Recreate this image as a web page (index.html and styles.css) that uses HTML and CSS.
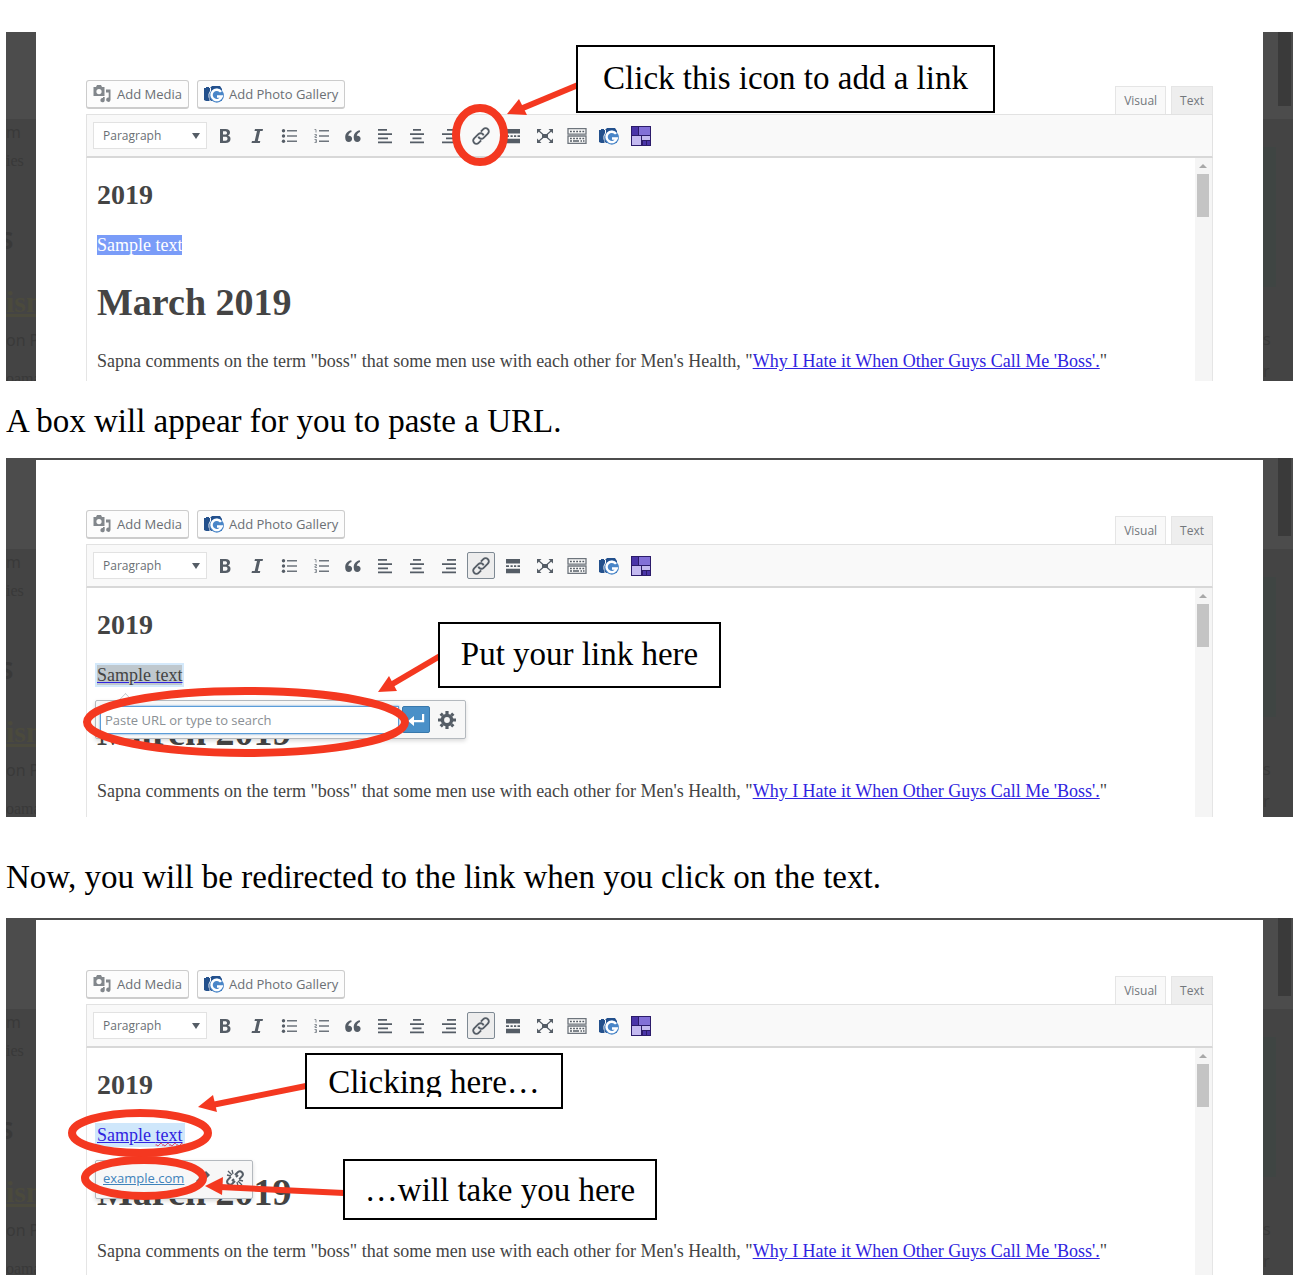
FILE: index.html
```html
<!DOCTYPE html>
<html lang="en">
<head>
<meta charset="utf-8">
<title>Adding a link to text</title>
<link rel="stylesheet" href="styles.css">
</head>
<body>
<svg class="sprite" aria-hidden="true">
  <symbol id="i-media" viewBox="0 0 18 18">
    <path fill="#82878c" fill-rule="evenodd" d="M0 2h2.500l1-2h4l1 2H11v9H0zM5.500 4a2.600 2.600 0 1 0 0 5.200a2.600 2.600 0 0 0 0-5.200z"/>
    <path fill="#82878c" d="M12.500 4.500H17V15a2.200 2.200 0 1 1-1.800-2.500V7.500h-2.700zM9.500 12h1.700v3.500A2.200 2.200 0 1 1 9.500 13z"/>
  </symbol>
  <symbol id="i-gallery" viewBox="0 0 20 18">
    <path fill="#23508c" d="M0 3h2V2h3v1h1l2-2h8l2 3v12H2l-2-1z"/>
    <path fill="#f9f9f9" d="M6 3h1v3L5.500 9v5L7 16v2H5.500v-3L4.500 12V9L6 6z"/>
    <circle cx="12.800" cy="10.500" r="7.200" fill="#4a86c8"/>
    <path d="M17 6.900A5.200 5.200 0 1 0 17.700 11.500H13" fill="none" stroke="#fff" stroke-width="2.400"/>
  </symbol>
  <symbol id="i-bold" viewBox="0 0 20 20">
    <path fill="#555d66" fill-rule="evenodd" d="M5 3h5.500c3 0 4.500 1.300 4.500 3.500 0 1.500-.8 2.600-2.100 3.100 1.700.4 2.600 1.600 2.600 3.300 0 2.600-1.800 4.100-5 4.100H5zM8 5.300v3.300h2c1.300 0 2-.6 2-1.700s-.7-1.600-2-1.600zM8 10.800v3.900h2.400c1.300 0 2.100-.7 2.100-2s-.8-1.900-2.200-1.900z"/>
  </symbol>
  <symbol id="i-italic" viewBox="0 0 20 20">
    <path fill="#555d66" d="M8 3h8l-.4 2h-2.500l-2.300 10h2.500l-.5 2H4.500l.5-2h2.700L10 5H7.500z"/>
  </symbol>
  <symbol id="i-ul" viewBox="0 0 20 20">
    <path fill="#6d747c" d="M8 4h10v1.400H8zM8 9.300h10v1.400H8zM8 14.600h10V16H8z"/>
    <circle cx="4.500" cy="4.800" r="1.700" fill="#555d66"/><circle cx="4.500" cy="10" r="1.700" fill="#555d66"/><circle cx="4.500" cy="15.200" r="1.700" fill="#555d66"/>
  </symbol>
  <symbol id="i-ol" viewBox="0 0 20 20">
    <path fill="#6d747c" d="M8 4h10v1.400H8zM8 9.300h10v1.400H8zM8 14.600h10V16H8z"/>
    <path fill="none" stroke="#8a9097" d="M3.500 3.500h1.500V6.500M3.500 8.500h2v1.500h-1.500v1.500h2M3.500 13.500h2v3h-2M4 15h1.500"/>
  </symbol>
  <symbol id="i-quote" viewBox="0 0 20 20">
    <path fill="#555d66" d="M8.300 4.300C5 4.800 2.200 7.400 2.200 11.400c0 2.900 1.500 4.600 3.600 4.600 1.900 0 3.300-1.400 3.300-3.200 0-1.800-1.200-3.100-2.900-3.100-.4 0-.7.100-.9.200.2-1.900 1.500-3.300 3.300-3.900zM16.800 4.300c-3.300.5-6.100 3.100-6.100 7.100 0 2.900 1.500 4.600 3.600 4.600 1.900 0 3.300-1.400 3.300-3.200 0-1.800-1.200-3.100-2.900-3.100-.4 0-.7.100-.9.200.2-1.900 1.500-3.300 3.300-3.900z"/>
  </symbol>
  <symbol id="i-left" viewBox="0 0 20 20"><path fill="#555d66" d="M3 3h9v1.800H3zM3 7.200h14V9H3zM3 11.400h10v1.800H3zM3 15.400h14v1.800H3z"/></symbol>
  <symbol id="i-center" viewBox="0 0 20 20"><path fill="#555d66" d="M6 3h8v1.800H6zM3 7.200h14V9H3zM5.500 11.400h9v1.800h-9zM3 15.400h14v1.800H3z"/></symbol>
  <symbol id="i-right" viewBox="0 0 20 20"><path fill="#555d66" d="M8 3h9v1.800H8zM3 7.200h14V9H3zM7 11.400h10v1.800H7zM3 15.400h14v1.800H3z"/></symbol>
  <symbol id="i-link" viewBox="0 0 20 20">
    <g transform="rotate(-45 10 10)" fill="none" stroke="#555d66" stroke-width="1.900">
      <path d="M7 13.200H3.500a3.200 3.200 0 0 1 0-6.400H9.500a3.200 3.200 0 0 1 2.800 4.600"/><path d="M13 6.800h3.500a3.200 3.200 0 0 1 0 6.400H10.500a3.200 3.200 0 0 1-2.800-4.600"/>
    </g>
  </symbol>
  <symbol id="i-more" viewBox="0 0 20 20"><path fill="#555d66" d="M3 3h14v4.500H3zM3 9.200h3v1.800H3zM7.500 9.200h2.200v1.800H7.500zM11 9.200h2.200v1.800H11zM14.500 9.200H17v1.800h-2.500zM3 12.700h14v4.500H3z"/></symbol>
  <symbol id="i-full" viewBox="0 0 20 20">
    <path fill="#555d66" d="M7 8h6v4H7zM2 3h4.500L2 7.500zM18 3v4.500L13.500 3zM2 17v-4.500L6.500 17zM18 17h-4.500l4.500-4.500z"/>
    <path stroke="#555d66" stroke-width="1.200" d="M4 5l4 3.500M16 5l-4 3.500M4 15l4-3.500M16 15l-4-3.500"/>
  </symbol>
  <symbol id="i-keys" viewBox="0 0 20 20">
    <path fill="none" stroke="#6d747c" stroke-width="1.300" d="M1 2.600h18v5.600H1zM1 10h18v7.400H1z"/>
    <path stroke="#555d66" stroke-width="1.500" stroke-dasharray="1.800 1.300" d="M3 5.400h15M3 12.400h15"/>
    <path stroke="#555d66" stroke-width="1.600" d="M3 15h2M6 15h6M13.500 15h1.500M16 15h1.500"/>
  </symbol>
  <symbol id="i-blocks" viewBox="0 0 20 20">
    <path fill="#2c1c6b" d="M0 0h20v20H0z"/><path fill="#4a35a8" d="M1 1h6v8H1zM12 15h3v4h-3zM16 15h3v4h-3z"/>
    <path fill="#8270d8" d="M8 1h11v8H8z"/><path fill="#c3b9f0" d="M1 10h9v9H1zM11 10h8v4h-8z"/>
  </symbol>
  <symbol id="i-enter" viewBox="0 0 20 20"><path fill="#fff" d="M16 4h2.200v8.200H8V16l-6-5 6-5v4h8z"/></symbol>
  <symbol id="i-gear" viewBox="0 0 20 20">
    <circle cx="10" cy="10" r="4.600" fill="none" stroke="#555d66" stroke-width="3.400"/>
    <path stroke="#555d66" stroke-width="3.200" d="M10 1v3M10 16v3M1 10h3M16 10h3M3.700 3.700l2 2M14.300 14.300l2 2M3.700 16.300l2-2M14.300 5.700l2-2"/>
  </symbol>
  <symbol id="i-edit" viewBox="0 0 20 20"><path fill="#555d66" d="M13 3l4 4-9.500 9.500L3 17l.5-4.500z"/></symbol>
  <symbol id="i-unlink" viewBox="0 0 20 20">
    <path fill="none" stroke="#555d66" stroke-width="2" d="M10 7l3-3a3 3 0 0 1 4.200 4.200l-3 3M10 13l-3 3a3 3 0 0 1-4.200-4.200l3-3M11 9l2-2M7 13l2-2"/>
    <path stroke="#555d66" stroke-width="1.300" d="M3 3l4 4M7 2l1 4M2 7l4 1M17 17l-4-4M13 18l-1-4M18 13l-4-1"/>
  </symbol>
</svg>

<main class="guide">
  <figure class="shot">
    <div class="gutter gutter-left" aria-hidden="true"><span>m</span><span class="ghost-serif">ies</span><span class="ghost-mark">S</span><span class="ghost-link">ism</span><span class="ghost-big">on P</span><span class="ghost-serif">oama</span></div>
    <div class="stage">
      <div class="editor-top">
        <div class="media">
          <button class="btn"><svg class="ico"><use href="#i-media"/></svg>Add Media</button>
          <button class="btn"><svg class="ico ico-wide"><use href="#i-gallery"/></svg>Add Photo Gallery</button>
        </div>
        <div class="tabs"><button class="tab tab-on">Visual</button><button class="tab">Text</button></div>
      </div>
      <div class="toolbar">
        <label class="format"><select aria-label="Format"><option>Paragraph</option></select></label>
        <button class="tool" aria-label="Bold"><svg><use href="#i-bold"/></svg></button>
        <button class="tool" aria-label="Italic"><svg><use href="#i-italic"/></svg></button>
        <button class="tool" aria-label="Bulleted list"><svg><use href="#i-ul"/></svg></button>
        <button class="tool" aria-label="Numbered list"><svg><use href="#i-ol"/></svg></button>
        <button class="tool" aria-label="Blockquote"><svg><use href="#i-quote"/></svg></button>
        <button class="tool" aria-label="Align left"><svg><use href="#i-left"/></svg></button>
        <button class="tool" aria-label="Align center"><svg><use href="#i-center"/></svg></button>
        <button class="tool" aria-label="Align right"><svg><use href="#i-right"/></svg></button>
        <button class="tool" aria-label="Insert link"><svg><use href="#i-link"/></svg></button>
        <button class="tool" aria-label="Read more tag"><svg><use href="#i-more"/></svg></button>
        <button class="tool" aria-label="Fullscreen"><svg><use href="#i-full"/></svg></button>
        <button class="tool" aria-label="Toolbar toggle"><svg><use href="#i-keys"/></svg></button>
        <button class="tool" aria-label="Photo gallery"><svg><use href="#i-gallery"/></svg></button>
        <button class="tool" aria-label="Blocks"><svg><use href="#i-blocks"/></svg></button>
      </div>
      <div class="editor">
        <div class="page">
          <h3>2019</h3>
          <p><span class="selected">Sample text</span></p>
          <h1>March 2019</h1>
          <p>Sapna comments on the term "boss" that some men use with each other for Men's Health, "<a href="#boss">Why I Hate it When Other Guys Call Me 'Boss'.</a>"</p>
        </div>
        <div class="scroll" aria-hidden="true"><i class="scroll-up"></i><i class="scroll-thumb"></i></div>
      </div>
    </div>
    <div class="gutter gutter-right" aria-hidden="true"><div class="ghost-side"><i class="ghost-photo"></i><span>s</span><span>r</span></div><i class="ghost-thumb"></i></div>
    <svg class="marks" aria-hidden="true">
      <ellipse cx="474" cy="103" rx="24" ry="27"/>
      <path class="shaft" d="M572 53L512 78"/><path class="head" d="M501 82l12-15 8 16z"/>
    </svg>
    <div class="callout callout-icon">Click this icon to add a link</div>
  </figure>

  <p class="caption">A box will appear for you to paste a URL.</p>

  <figure class="shot shot-strip">
    <div class="gutter gutter-left" aria-hidden="true"><span>m</span><span class="ghost-serif">ies</span><span class="ghost-mark">S</span><span class="ghost-link">ism</span><span class="ghost-big">on P</span><span class="ghost-serif">oama</span></div>
    <div class="stage">
      <div class="editor-top">
        <div class="media">
          <button class="btn"><svg class="ico"><use href="#i-media"/></svg>Add Media</button>
          <button class="btn"><svg class="ico ico-wide"><use href="#i-gallery"/></svg>Add Photo Gallery</button>
        </div>
        <div class="tabs"><button class="tab tab-on">Visual</button><button class="tab">Text</button></div>
      </div>
      <div class="toolbar">
        <label class="format"><select aria-label="Format"><option>Paragraph</option></select></label>
        <button class="tool" aria-label="Bold"><svg><use href="#i-bold"/></svg></button>
        <button class="tool" aria-label="Italic"><svg><use href="#i-italic"/></svg></button>
        <button class="tool" aria-label="Bulleted list"><svg><use href="#i-ul"/></svg></button>
        <button class="tool" aria-label="Numbered list"><svg><use href="#i-ol"/></svg></button>
        <button class="tool" aria-label="Blockquote"><svg><use href="#i-quote"/></svg></button>
        <button class="tool" aria-label="Align left"><svg><use href="#i-left"/></svg></button>
        <button class="tool" aria-label="Align center"><svg><use href="#i-center"/></svg></button>
        <button class="tool" aria-label="Align right"><svg><use href="#i-right"/></svg></button>
        <button class="tool tool-on" aria-label="Insert link"><svg><use href="#i-link"/></svg></button>
        <button class="tool" aria-label="Read more tag"><svg><use href="#i-more"/></svg></button>
        <button class="tool" aria-label="Fullscreen"><svg><use href="#i-full"/></svg></button>
        <button class="tool" aria-label="Toolbar toggle"><svg><use href="#i-keys"/></svg></button>
        <button class="tool" aria-label="Photo gallery"><svg><use href="#i-gallery"/></svg></button>
        <button class="tool" aria-label="Blocks"><svg><use href="#i-blocks"/></svg></button>
      </div>
      <div class="editor">
        <div class="page">
          <h3>2019</h3>
          <p class="anchor"><a class="pending" href="#sample">Sample text</a>
            <span class="popup popup-edit">
              <input type="text" aria-label="Link URL" placeholder="Paste URL or type to search">
              <button class="apply" aria-label="Apply"><svg><use href="#i-enter"/></svg></button>
              <button class="tool" aria-label="Link options"><svg><use href="#i-gear"/></svg></button>
            </span>
          </p>
          <h1>March 2019</h1>
          <p>Sapna comments on the term "boss" that some men use with each other for Men's Health, "<a href="#boss">Why I Hate it When Other Guys Call Me 'Boss'.</a>"</p>
        </div>
        <div class="scroll" aria-hidden="true"><i class="scroll-up"></i><i class="scroll-thumb"></i></div>
      </div>
    </div>
    <div class="gutter gutter-right" aria-hidden="true"><div class="ghost-side"><i class="ghost-photo"></i><span>s</span><span>r</span></div><i class="ghost-thumb"></i></div>
    <svg class="marks" aria-hidden="true">
      <ellipse cx="240" cy="264" rx="159" ry="31"/>
      <path class="shaft" d="M434 198L383 228"/><path class="head" d="M372 234l11-16 8 15z"/>
    </svg>
    <div class="callout callout-put">Put your link here</div>
  </figure>

  <p class="caption caption-spaced">Now, you will be redirected to the link when you click on the text.</p>

  <figure class="shot shot-strip">
    <div class="gutter gutter-left" aria-hidden="true"><span>m</span><span class="ghost-serif">ies</span><span class="ghost-mark">S</span><span class="ghost-link">ism</span><span class="ghost-big">on P</span><span class="ghost-serif">oama</span></div>
    <div class="stage">
      <div class="editor-top">
        <div class="media">
          <button class="btn"><svg class="ico"><use href="#i-media"/></svg>Add Media</button>
          <button class="btn"><svg class="ico ico-wide"><use href="#i-gallery"/></svg>Add Photo Gallery</button>
        </div>
        <div class="tabs"><button class="tab tab-on">Visual</button><button class="tab">Text</button></div>
      </div>
      <div class="toolbar">
        <label class="format"><select aria-label="Format"><option>Paragraph</option></select></label>
        <button class="tool" aria-label="Bold"><svg><use href="#i-bold"/></svg></button>
        <button class="tool" aria-label="Italic"><svg><use href="#i-italic"/></svg></button>
        <button class="tool" aria-label="Bulleted list"><svg><use href="#i-ul"/></svg></button>
        <button class="tool" aria-label="Numbered list"><svg><use href="#i-ol"/></svg></button>
        <button class="tool" aria-label="Blockquote"><svg><use href="#i-quote"/></svg></button>
        <button class="tool" aria-label="Align left"><svg><use href="#i-left"/></svg></button>
        <button class="tool" aria-label="Align center"><svg><use href="#i-center"/></svg></button>
        <button class="tool" aria-label="Align right"><svg><use href="#i-right"/></svg></button>
        <button class="tool tool-on" aria-label="Insert link"><svg><use href="#i-link"/></svg></button>
        <button class="tool" aria-label="Read more tag"><svg><use href="#i-more"/></svg></button>
        <button class="tool" aria-label="Fullscreen"><svg><use href="#i-full"/></svg></button>
        <button class="tool" aria-label="Toolbar toggle"><svg><use href="#i-keys"/></svg></button>
        <button class="tool" aria-label="Photo gallery"><svg><use href="#i-gallery"/></svg></button>
        <button class="tool" aria-label="Blocks"><svg><use href="#i-blocks"/></svg></button>
      </div>
      <div class="editor">
        <div class="page">
          <h3>2019</h3>
          <p class="anchor"><a class="linked" href="#sample">Sample <span class="misspelt">text</span></a>
            <span class="popup popup-view">
              <a href="#example">example.com</a>
              <button class="tool" aria-label="Edit link"><svg><use href="#i-edit"/></svg></button>
              <button class="tool" aria-label="Remove link"><svg><use href="#i-unlink"/></svg></button>
            </span>
          </p>
          <h1>March 2019</h1>
          <p>Sapna comments on the term "boss" that some men use with each other for Men's Health, "<a href="#boss">Why I Hate it When Other Guys Call Me 'Boss'.</a>"</p>
        </div>
        <div class="scroll" aria-hidden="true"><i class="scroll-up"></i><i class="scroll-thumb"></i></div>
      </div>
    </div>
    <div class="gutter gutter-right" aria-hidden="true"><div class="ghost-side"><i class="ghost-photo"></i><span>s</span><span>r</span></div><i class="ghost-thumb"></i></div>
    <svg class="marks" aria-hidden="true">
      <ellipse cx="134" cy="215" rx="68" ry="20"/>
      <ellipse cx="138" cy="260" rx="59" ry="18"/>
      <path class="shaft" d="M300 168L206 187"/><path class="head" d="M192 189l15-12 4 17z"/>
      <path class="shaft" d="M338 275L214 269"/><path class="head" d="M199 268l18-9-1 18z"/>
    </svg>
    <div class="callout callout-clicking"><span>Clicking here…</span></div>
    <div class="callout callout-take">…will take you here</div>
  </figure>
</main>
</body>
</html>
```
FILE: styles.css
```css
* { box-sizing: border-box; }
body { margin: 0; background: #fff; color: #000; font-family: "Liberation Serif", serif; }
button, input, select { font-family: "Open Sans", sans-serif; font-size: 13px; margin: 0; }
.sprite { position: absolute; width: 0; height: 0; }
.guide { padding: 32px 5px 3px 6px; }

.caption { margin: 0; padding: 20px 0 17px; font-size: 33px; line-height: 40px; }
.caption-spaced { padding: 40px 0 21px; }

/* one annotated editor view */
.shot { position: relative; margin: 0; display: grid; grid-template-columns: 30px 1fr 30px; }
.stage { padding: 48px 50px 0; min-width: 0; background: #fff; }
.shot-strip .stage { border-top: 2px solid #4c4c4c; padding-top: 50px; }

.gutter { overflow: hidden; background: linear-gradient(#4c4c4c 87px, #444 87px); }
.shot-strip .gutter { background: linear-gradient(#4c4c4c 91px, #444 91px); }
.gutter-left { display: flex; flex-direction: column; height: 0; min-height: 100%; padding-top: 88px; color: #393939; font: 16px/24px "Open Sans", sans-serif; white-space: nowrap; }
.shot-strip .gutter-left { padding-top: 92px; }
.gutter-left .ghost-serif { font-family: "Liberation Serif", serif; line-height: 34px; }
.gutter-left .ghost-mark { font-size: 24px; font-weight: 700; line-height: 124px; margin-left: -6px; }
.gutter-left .ghost-link { font: 700 30px/32px "Liberation Serif", serif; color: #4b4a3d; text-decoration: underline; margin-top: -16px; }
.gutter-left .ghost-big { line-height: 44px; }
.gutter-right { display: flex; justify-content: space-between; padding-right: 2px; }
.ghost-side { width: 13px; height: 0; padding-top: 115px; color: #393939; font: 16px/32px "Open Sans", sans-serif; }
.ghost-side span { display: block; }
.ghost-photo { display: block; height: 140px; margin-bottom: 36px; background: #3f4543; }
.ghost-thumb { width: 13px; height: 74px; background: #3a3a3a; }
.shot-strip .ghost-thumb { height: 78px; }
.shot-strip .ghost-side { padding-top: 119px; }

.editor-top { display: flex; justify-content: space-between; height: 34px; }
.media { display: flex; gap: 8px; align-items: flex-start; }
.btn { display: flex; align-items: center; gap: 5px; height: 29px; padding: 0 6px; border: 1px solid #ccc; border-bottom-width: 2px; border-radius: 3px; background: #fcfcfc; color: #6a6f74; white-space: nowrap; }
.ico { width: 19px; height: 18px; }
.ico-wide { width: 20px; }
.tabs { display: flex; gap: 5px; align-items: flex-end; }
.tab { height: 28px; padding: 0 8px; border: 1px solid #e5e5e5; border-bottom: 0; background: #eee; color: #72777c; font-size: 12px; }
.tab-on { background: #f9f9f9; }

.toolbar { display: flex; align-items: center; gap: 4px; height: 44px; padding: 0 6px; background: #f9f9f9; border: 1px solid #e2e2e2; border-bottom: 2px solid #d8d8d8; }
.format { position: relative; flex: none; }
.format select { appearance: none; width: 114px; height: 27px; padding: 0 9px; border: 1px solid #e2e2e2; border-radius: 0; background: #fff; color: #6a6f74; font-size: 12px; }
.format::after { content: ""; position: absolute; right: 7px; top: 11px; border: 4px solid transparent; border-top: 6px solid #555d66; border-bottom: 0; }
.tool { display: flex; align-items: center; justify-content: center; flex: none; width: 28px; height: 27px; padding: 0; border: 1px solid transparent; border-radius: 2px; background: none; }
.tool svg { width: 20px; height: 20px; }
.tool-on { border-color: #7e8993; background: #ededed; }

.editor { display: flex; border-left: 1px solid #e5e5e5; border-right: 1px solid #e5e5e5; }
.page { flex: 1; min-width: 0; padding: 23px 10px 8px; color: #444; font-size: 18px; line-height: 24px; }
.shot-strip .page { padding-bottom: 14px; }
.shot-strip:last-child .page { padding-bottom: 12px; }
.page h3 { margin: 0 0 24px; font-size: 28px; line-height: 28px; }
.page h1 { margin: 25px 0 27px; font-size: 38px; line-height: 40px; }
.page p { margin: 0; }
.page a { color: #3024e0; }
.selected { background: #7a9cf8; color: #fff; }
.page .pending { color: #444; background: #bfc8ce; box-shadow: 0 0 0 2px #d4e9fb; text-decoration-color: #3024e0; }
.page .linked { background: #cfe7fb; box-shadow: 0 0 0 2px #cfe7fb; }
.misspelt { text-decoration: underline wavy #e03050 1px; }
.scroll { width: 17px; padding: 6px 3px 0 2px; background: #f5f5f5; }
.scroll i { display: block; }
.scroll-up { width: 8px; height: 4px; margin: 0 2px 6px; background: #a8a8a8; clip-path: polygon(50% 0, 100% 100%, 0 100%); }
.scroll-thumb { height: 43px; background: #c4c4c4; }

/* inline link popups float over the text */
.anchor { position: relative; }
.popup { position: absolute; left: -2px; top: 37px; display: flex; align-items: center; height: 39px; padding: 0 4px; border: 1px solid #b4b9be; border-radius: 2px; background: #f7f7f7; box-shadow: 0 2px 4px rgba(0, 0, 0, .15); font: 13px "Open Sans", sans-serif; }
.popup-edit::before { content: ""; position: absolute; left: 24px; top: -6px; width: 10px; height: 10px; border: 1px solid #c8ccd0; border-right: 0; border-bottom: 0; background: #fff; transform: rotate(45deg); clip-path: polygon(0 0, 100% 0, 0 100%); }
.popup-edit { width: 371px; gap: 3px; }
.popup-edit input { flex: 1; min-width: 0; height: 28px; padding: 0 4px; border: 1px solid #5b9dd9; box-shadow: 0 0 2px #5b9dd9; background: #fff; }
.popup-edit input::placeholder { color: #8a8f94; opacity: 1; }
.apply { width: 28px; height: 27px; display: flex; align-items: center; justify-content: center; padding: 0; border: 1px solid #3878ac; border-radius: 2px; background: #4a90c8; }
.apply svg { width: 20px; height: 20px; }
.popup-view { width: 158px; padding: 0 3px 4px 7px; justify-content: space-between; }
.popup-view a { color: #3f83bb; }

/* red pen marks and boxed notes lie over the view */
.marks { position: absolute; left: 0; top: 0; width: 700px; height: 340px; max-width: 100%; pointer-events: none; }
.marks ellipse { fill: none; stroke: #f43820; stroke-width: 8; }
.shaft { stroke: #f43820; stroke-width: 6; }
.head { fill: #f43820; }
.callout { position: absolute; display: flex; align-items: center; justify-content: center; padding-bottom: 2px; border: 2px solid #000; background: #fff; font-size: 33px; line-height: 38px; white-space: nowrap; }
.callout-icon { left: 570px; top: 13px; width: 419px; height: 68px; }
.callout-put { left: 432px; top: 164px; width: 283px; height: 66px; }
.callout-clicking { left: 299px; top: 135px; width: 258px; height: 56px; }
.callout-clicking span { height: 34px; overflow: hidden; }
.callout-take { left: 337px; top: 241px; width: 314px; height: 61px; padding-bottom: 0; }
```
